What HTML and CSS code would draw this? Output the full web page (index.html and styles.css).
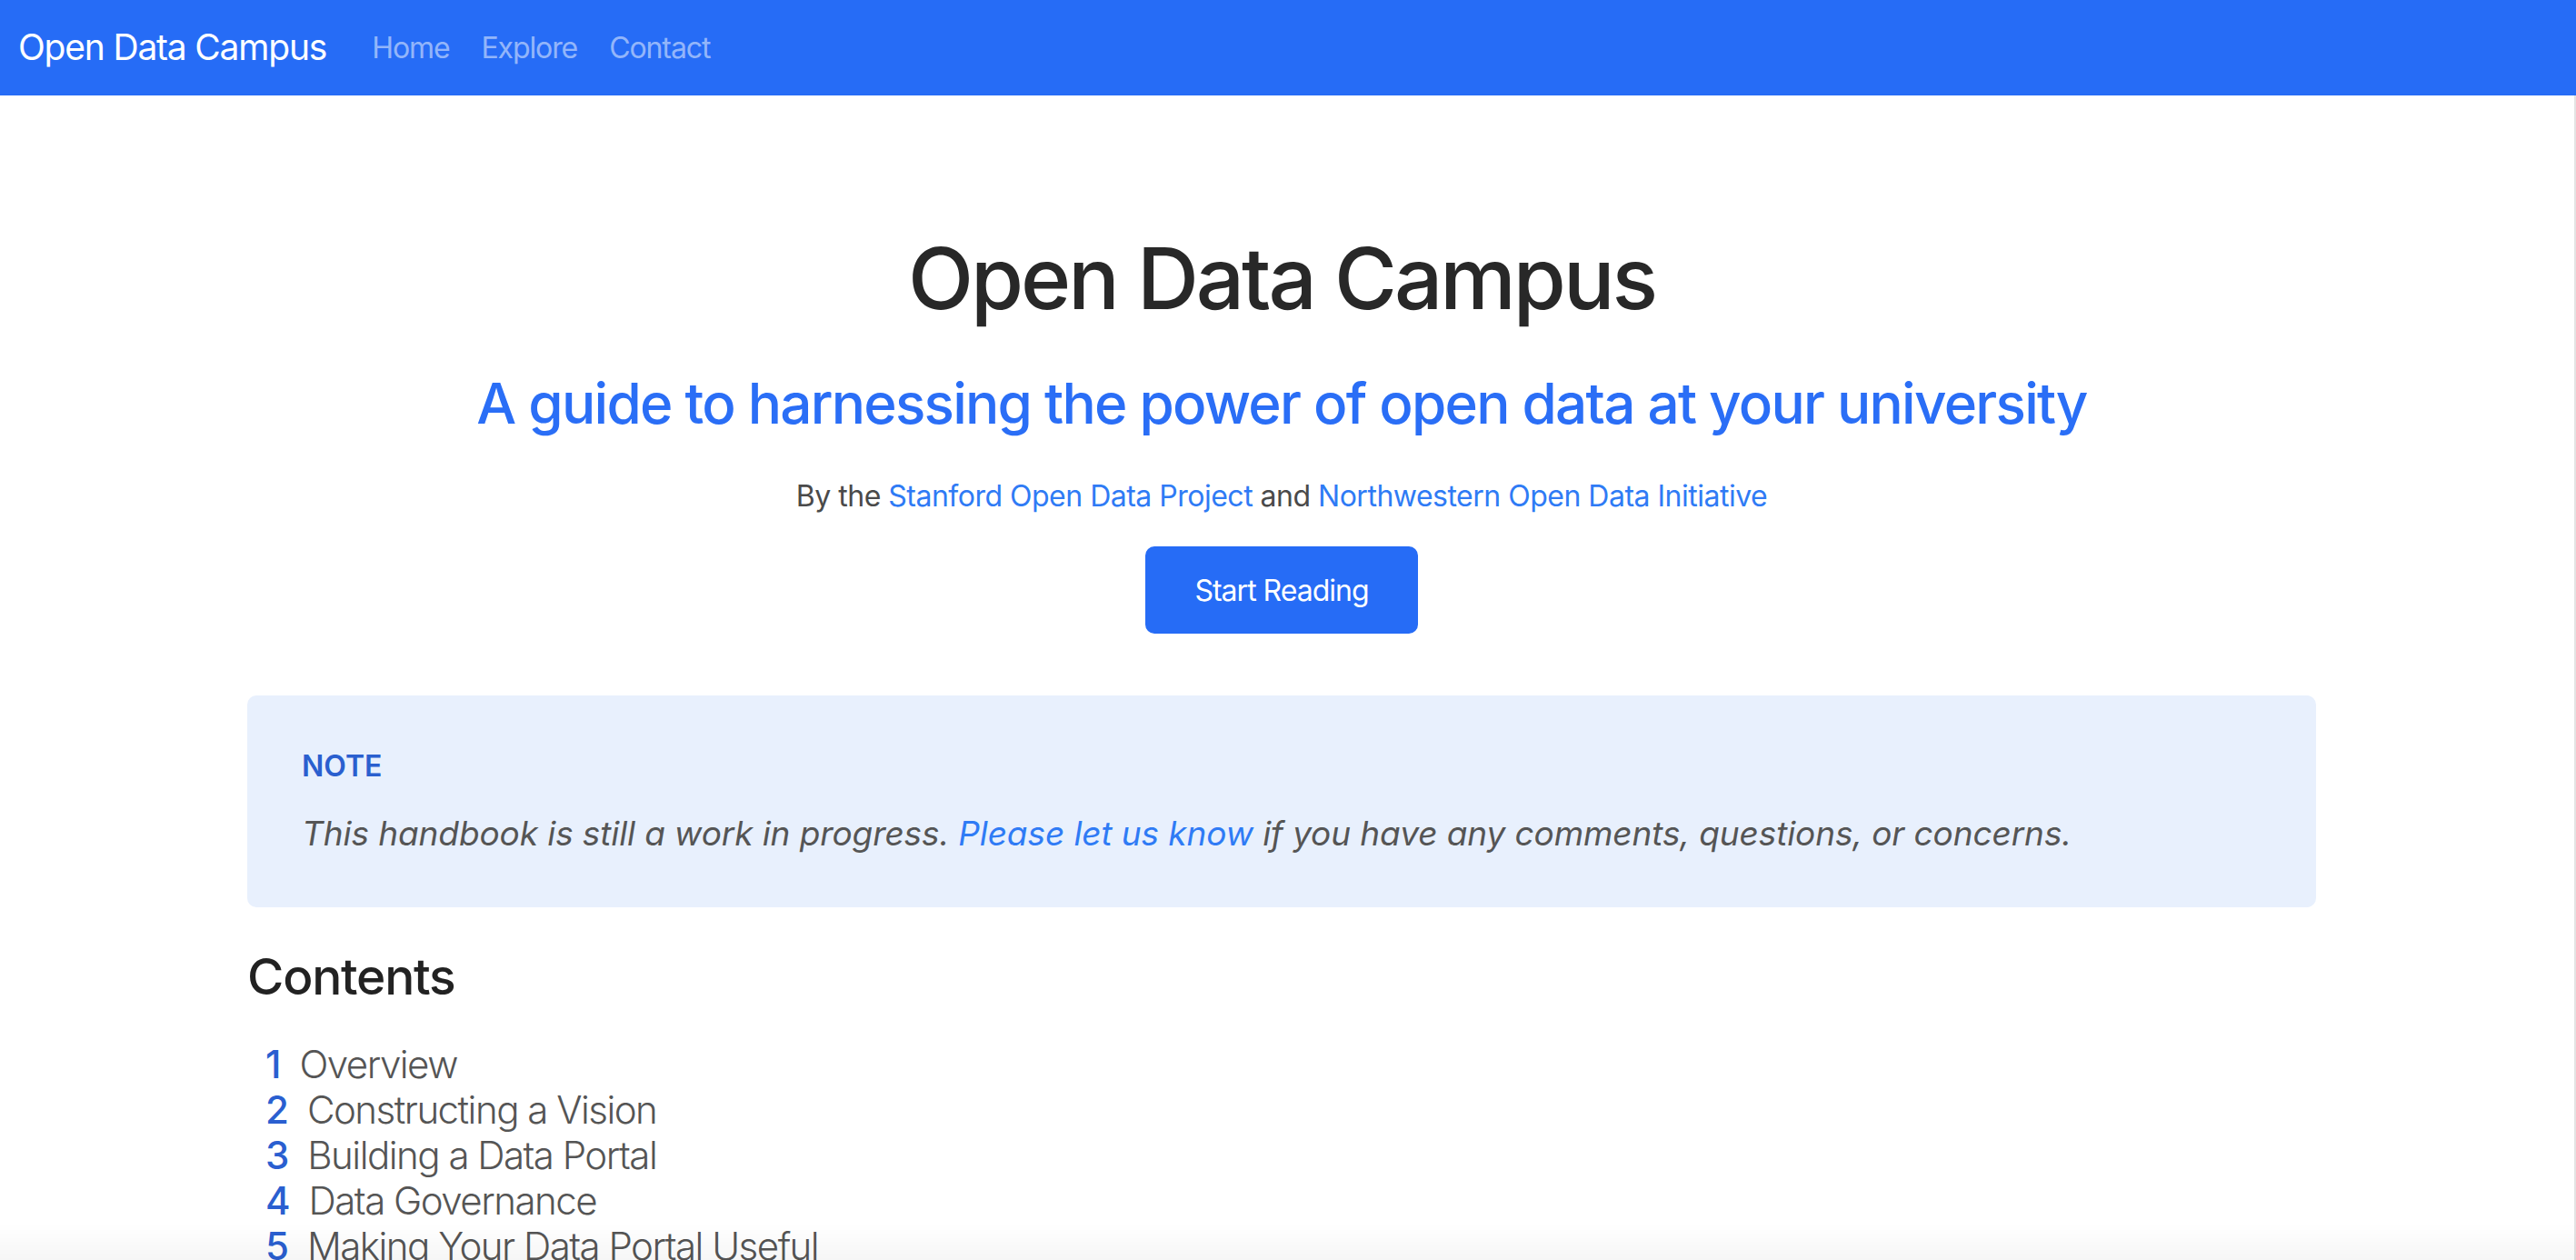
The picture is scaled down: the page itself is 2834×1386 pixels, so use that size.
FILE: index.html
```html
<!DOCTYPE html>
<html lang="en">
<head>
<meta charset="utf-8">
<title>Open Data Campus</title>
<link rel="stylesheet" href="styles.css">
</head>
<body>
<nav class="navbar">
  <a class="brand" href="#">Open Data Campus</a>
  <ul class="nav-links">
    <li><a href="#">Home</a></li>
    <li><a href="#">Explore</a></li>
    <li><a href="#">Contact</a></li>
  </ul>
</nav>
<div class="page">
  <main class="container">
    <header class="hero">
      <h1 class="title">Open Data Campus</h1>
      <h2 class="subtitle">A guide to harnessing the power of open data at your university</h2>
      <p class="byline">By the <a href="#">Stanford Open Data Project</a> and <a href="#">Northwestern Open Data Initiative</a></p>
      <a class="btn" href="#">Start Reading</a>
    </header>
    <section class="note">
      <div class="note-label">NOTE</div>
      <p class="note-text">This handbook is still a work in progress. <a href="#">Please let us know</a> if you have any comments, questions, or concerns.</p>
    </section>
    <section class="toc">
      <h3 class="toc-title">Contents</h3>
      <ol class="toc-list">
        <li><span class="num">1</span>Overview</li>
        <li><span class="num">2</span>Constructing a Vision</li>
        <li><span class="num">3</span>Building a Data Portal</li>
        <li><span class="num">4</span>Data Governance</li>
        <li><span class="num">5</span>Making Your Data Portal Useful</li>
      </ol>
    </section>
  </main>
</div>
<div class="bottom-fade"></div>
</body>
</html>
```

FILE: styles.css
```css
html, body {
  margin: 0;
  padding: 0;
}
html {
  overflow: hidden;
}
body {
  font-family: Inter, "Liberation Sans", sans-serif;
  color: #555;
  background: #fff;
}
a {
  text-decoration: none;
}

.navbar {
  height: 105px;
  background: #266cf6;
  display: flex;
  align-items: center;
  padding: 0 20px;
  box-sizing: border-box;
}
.brand {
  color: #fff;
  font-size: 39px;
  letter-spacing: -1.2px;
  line-height: 1;
  margin-right: 50px;
  padding-bottom: 2px;
}
.nav-links {
  list-style: none;
  margin: 0;
  padding: 0;
  display: flex;
  gap: 35px;
}
.nav-links a {
  color: rgba(255, 255, 255, 0.52);
  font-size: 32px;
  letter-spacing: -1.1px;
  line-height: 1;
}

.page {
  padding-right: 12px;
  border-right: 2px solid #e4e4e4;
}
.container {
  width: 2276px;
  margin: 0 auto;
}

.hero {
  padding-top: 144px;
  display: flex;
  flex-direction: column;
  align-items: center;
  text-align: center;
}
.title {
  margin: 0;
  font-size: 94px;
  line-height: 115px;
  font-weight: 500;
  color: #282828;
  letter-spacing: -3px;
}
.subtitle {
  margin: 41px 0 0;
  font-size: 62px;
  line-height: 77px;
  font-weight: 500;
  color: #2a6ef6;
  letter-spacing: -1.75px;
}
.byline {
  margin: 40px 0 0;
  font-size: 32px;
  line-height: 48px;
  color: #4a4a4a;
  letter-spacing: -0.5px;
}
.byline a {
  color: #2f7bf5;
}
.btn {
  margin-top: 31px;
  width: 300px;
  height: 96px;
  box-sizing: border-box;
  display: flex;
  align-items: center;
  justify-content: center;
  background: #266cf6;
  color: #fff;
  font-size: 32px;
  letter-spacing: -1px;
  border-radius: 10px;
}

.note {
  margin-top: 68px;
  background: #e8f0fd;
  border-radius: 10px;
  padding: 54px 60px;
}
.note-label {
  font-size: 32px;
  line-height: 48px;
  font-weight: 600;
  color: #2a5fcf;
}
.note-text {
  margin: 22px 0 0;
  font-size: 37px;
  line-height: 55px;
  font-style: italic;
  color: #555;
  letter-spacing: -0.1px;
}
.note-text a {
  color: #2f7bf5;
}

.toc {
  margin-top: 43px;
}
.toc-title {
  margin: 0;
  font-size: 55px;
  line-height: 67px;
  font-weight: 500;
  color: #222;
  letter-spacing: -1.2px;
}
.toc-list {
  list-style: none;
  margin: 38px 0 0;
  padding: 0 0 0 20px;
}
.toc-list li {
  font-size: 42px;
  line-height: 50px;
  font-weight: 300;
  color: #555;
  letter-spacing: -1.5px;
}
.num {
  color: #2a5fd0;
  font-weight: 500;
  letter-spacing: 0;
  margin-right: 20px;
}

.bottom-fade {
  position: fixed;
  left: 0;
  right: 0;
  bottom: 0;
  height: 40px;
  background: linear-gradient(to bottom, rgba(0, 0, 0, 0), rgba(0, 0, 0, 0.035));
  pointer-events: none;
}
```
